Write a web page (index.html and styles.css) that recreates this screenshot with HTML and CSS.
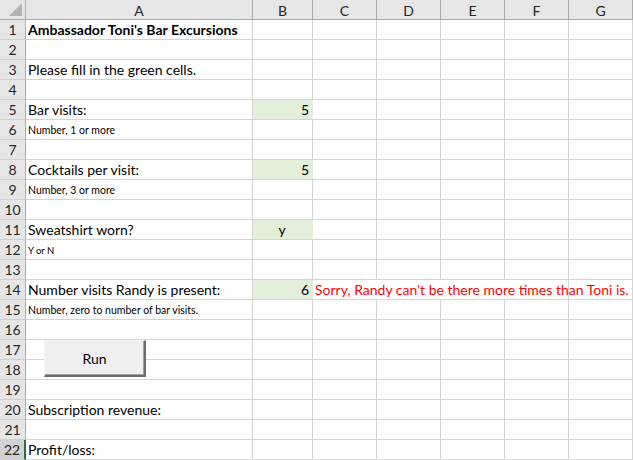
FILE: index.html
```html
<!DOCTYPE html>
<html>
<head>
<meta charset="utf-8">
<link rel="stylesheet" href="styles.css">
</head>
<body>
<div class="sheet">
  <div class="corner"><span class="tri"></span></div>
  <div class="ch">A</div><div class="ch">B</div><div class="ch">C</div><div class="ch">D</div><div class="ch">E</div><div class="ch">F</div><div class="ch">G</div>

  <div class="rh">1</div><div class="c txt bold">Ambassador Toni's Bar Excursions</div><div class="c"></div><div class="c"></div><div class="c"></div><div class="c"></div><div class="c"></div><div class="c"></div>
  <div class="rh">2</div><div class="c"></div><div class="c"></div><div class="c"></div><div class="c"></div><div class="c"></div><div class="c"></div><div class="c"></div>
  <div class="rh">3</div><div class="c txt">Please fill in the green cells.</div><div class="c"></div><div class="c"></div><div class="c"></div><div class="c"></div><div class="c"></div><div class="c"></div>
  <div class="rh">4</div><div class="c"></div><div class="c"></div><div class="c"></div><div class="c"></div><div class="c"></div><div class="c"></div><div class="c"></div>
  <div class="rh">5</div><div class="c txt">Bar visits:</div><div class="c input num">5</div><div class="c"></div><div class="c"></div><div class="c"></div><div class="c"></div><div class="c"></div>
  <div class="rh">6</div><div class="c txt small">Number, 1 or more</div><div class="c"></div><div class="c"></div><div class="c"></div><div class="c"></div><div class="c"></div><div class="c"></div>
  <div class="rh">7</div><div class="c"></div><div class="c"></div><div class="c"></div><div class="c"></div><div class="c"></div><div class="c"></div><div class="c"></div>
  <div class="rh">8</div><div class="c txt">Cocktails per visit:</div><div class="c input num">5</div><div class="c"></div><div class="c"></div><div class="c"></div><div class="c"></div><div class="c"></div>
  <div class="rh">9</div><div class="c txt small">Number, 3 or more</div><div class="c"></div><div class="c"></div><div class="c"></div><div class="c"></div><div class="c"></div><div class="c"></div>
  <div class="rh">10</div><div class="c"></div><div class="c"></div><div class="c"></div><div class="c"></div><div class="c"></div><div class="c"></div><div class="c"></div>
  <div class="rh">11</div><div class="c txt">Sweatshirt worn?</div><div class="c input center">y</div><div class="c"></div><div class="c"></div><div class="c"></div><div class="c"></div><div class="c"></div>
  <div class="rh">12</div><div class="c txt tiny">Y or N</div><div class="c"></div><div class="c"></div><div class="c"></div><div class="c"></div><div class="c"></div><div class="c"></div>
  <div class="rh">13</div><div class="c"></div><div class="c"></div><div class="c"></div><div class="c"></div><div class="c"></div><div class="c"></div><div class="c"></div>
  <div class="rh">14</div><div class="c txt">Number visits Randy is present:</div><div class="c input num">6</div><div class="c txt warn span5">Sorry, Randy can't be there more times than Toni is.</div><div class="c"></div>
  <div class="rh">15</div><div class="c txt small">Number, zero to number of bar visits.</div><div class="c"></div><div class="c"></div><div class="c"></div><div class="c"></div><div class="c"></div><div class="c"></div>
  <div class="rh">16</div><div class="c"></div><div class="c"></div><div class="c"></div><div class="c"></div><div class="c"></div><div class="c"></div><div class="c"></div>
  <div class="rh">17</div><div class="c"></div><div class="c"></div><div class="c"></div><div class="c"></div><div class="c"></div><div class="c"></div><div class="c"></div>
  <div class="rh">18</div><div class="c"></div><div class="c"></div><div class="c"></div><div class="c"></div><div class="c"></div><div class="c"></div><div class="c"></div>
  <div class="rh">19</div><div class="c"></div><div class="c"></div><div class="c"></div><div class="c"></div><div class="c"></div><div class="c"></div><div class="c"></div>
  <div class="rh">20</div><div class="c txt">Subscription revenue:</div><div class="c"></div><div class="c"></div><div class="c"></div><div class="c"></div><div class="c"></div><div class="c"></div>
  <div class="rh">21</div><div class="c"></div><div class="c"></div><div class="c"></div><div class="c"></div><div class="c"></div><div class="c"></div><div class="c"></div>
  <div class="rh active">22</div><div class="c txt">Profit/loss:</div><div class="c"></div><div class="c"></div><div class="c"></div><div class="c"></div><div class="c"></div><div class="c"></div>

  <button class="run" type="button">Run</button>
</div>
</body>
</html>
```

FILE: styles.css
```css
html, body {
  margin: 0;
  padding: 0;
  background: #ffffff;
}

.sheet {
  position: relative;
  display: grid;
  grid-template-columns: 26px 227px 60px 64px 64px 64px 64px 64px;
  grid-auto-rows: 20px;
  width: 633px;
  font-family: "Lato", "Open Sans", sans-serif;
  font-size: 14px;
  color: #000;
}

.corner {
  position: relative;
  background: #e6e6e6;
  border-right: 1px solid #ababab;
  border-bottom: 1px solid #ababab;
  box-sizing: border-box;
}

.tri {
  position: absolute;
  right: 3px;
  bottom: 3px;
  width: 0;
  height: 0;
  border-style: solid;
  border-width: 0 0 13px 13px;
  border-color: transparent transparent #b4b4b4 transparent;
}

.ch {
  background: #e6e6e6;
  border-right: 1px solid #ababab;
  border-bottom: 1px solid #ababab;
  box-sizing: border-box;
  display: flex;
  align-items: center;
  justify-content: center;
  color: #262626;
  font-size: 14px;
  padding-top: 1px;
}

.rh {
  background: #e6e6e6;
  border-right: 1px solid #ababab;
  border-bottom: 1px solid #d0d0d0;
  box-sizing: border-box;
  display: flex;
  align-items: flex-end;
  justify-content: center;
  padding-bottom: 1px;
  color: #262626;
  font-size: 14px;
}

.rh.active {
  background: #d2d2d2;
  border-right: 2px solid #217346;
}

.c {
  border-right: 1px solid #d4d4d4;
  border-bottom: 1px solid #d4d4d4;
  box-sizing: border-box;
  min-width: 0;
}

.txt {
  display: flex;
  align-items: flex-end;
  padding: 0 0 1px 2px;
  white-space: nowrap;
  overflow: visible;
}

.bold {
  font-weight: 700;
}

.small {
  font-size: 10.5px;
  padding-bottom: 3px;
}

.tiny {
  font-size: 9.5px;
  padding-bottom: 3px;
}

.input {
  background: #e2efda;
  border-right-color: #e2efda;
  display: flex;
  align-items: flex-end;
  padding: 0 3px 1px 2px;
}

.num {
  justify-content: flex-end;
}

.center {
  justify-content: center;
}

.warn {
  color: #ff0000;
}

.span5 {
  grid-column: span 4;
}

.run {
  position: absolute;
  left: 44px;
  top: 340px;
  width: 102px;
  height: 37px;
  margin: 0;
  padding: 0;
  background: #efefef;
  border-top: 1px solid #f5f5f5;
  border-left: 1px solid #f5f5f5;
  border-right: 2px solid #6b6b6b;
  border-bottom: 2px solid #6b6b6b;
  box-shadow: inset -1px -1px 0 #a0a0a0;
  font-family: "Lato", "Open Sans", sans-serif;
  font-size: 14px;
  color: #000;
  cursor: default;
}
```
